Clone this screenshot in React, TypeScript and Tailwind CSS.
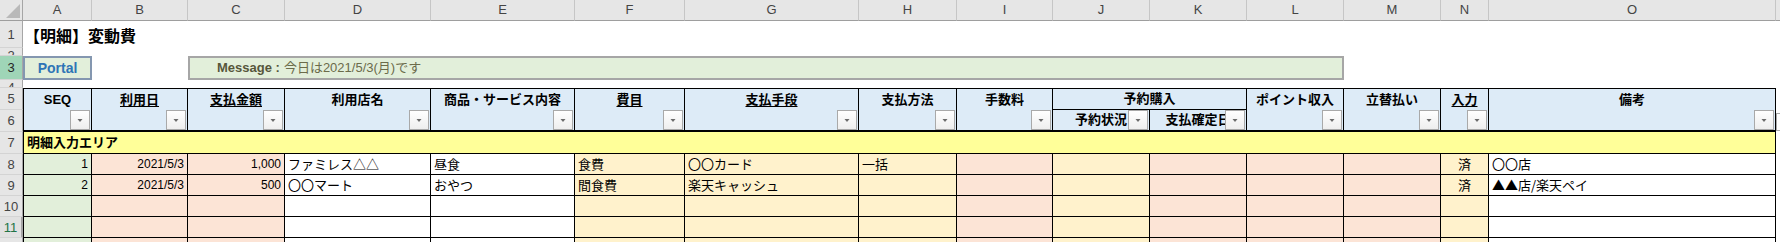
import React from 'react';

type Col = {
  letter: string;
  fill: string;
  align: string;
  head?: string;
  ul?: boolean;
  num?: boolean;
};

const FONT = "font-['Liberation_Sans','Noto_Sans_CJK_JP',sans-serif]";

// A..O (P is the sliver at the right edge)
const cols: Col[] = [
  { letter: 'A', fill: 'bg-[#e2efda]', align: 'justify-end', head: 'SEQ', num: true },
  { letter: 'B', fill: 'bg-[#fce4d6]', align: 'justify-end', head: '利用日', ul: true, num: true },
  { letter: 'C', fill: 'bg-[#fce4d6]', align: 'justify-end', head: '支払金額', ul: true, num: true },
  { letter: 'D', fill: 'bg-white', align: 'justify-start', head: '利用店名' },
  { letter: 'E', fill: 'bg-white', align: 'justify-start', head: '商品・サービス内容' },
  { letter: 'F', fill: 'bg-[#fff2cc]', align: 'justify-start', head: '費目', ul: true },
  { letter: 'G', fill: 'bg-[#fff2cc]', align: 'justify-start', head: '支払手段', ul: true },
  { letter: 'H', fill: 'bg-[#fff2cc]', align: 'justify-start', head: '支払方法' },
  { letter: 'I', fill: 'bg-[#fce4d6]', align: 'justify-end', head: '手数料', num: true },
  { letter: 'J', fill: 'bg-[#fff2cc]', align: 'justify-start' },
  { letter: 'K', fill: 'bg-[#fce4d6]', align: 'justify-start' },
  { letter: 'L', fill: 'bg-[#fce4d6]', align: 'justify-end', head: 'ポイント収入', num: true },
  { letter: 'M', fill: 'bg-[#fce4d6]', align: 'justify-end', head: '立替払い', num: true },
  { letter: 'N', fill: 'bg-[#fff2cc]', align: 'justify-center', head: '入力', ul: true },
  { letter: 'O', fill: 'bg-white', align: 'justify-start', head: '備考' }
];

const rows: string[][] = [
  ['1', '2021/5/3', '1,000', 'ファミレス△△', '昼食', '食費', '〇〇カード', '一括', '', '', '', '', '', '済', '〇〇店'],
  ['2', '2021/5/3', '500', '〇〇マート', 'おやつ', '間食費', '楽天キャッシュ', '', '', '', '', '', '', '済', '▲▲店/楽天ペイ'],
  ['', '', '', '', '', '', '', '', '', '', '', '', '', '', ''],
  ['', '', '', '', '', '', '', '', '', '', '', '', '', '', '']
];

function FilterButton() {
  return (
    <div className="absolute right-[1px] bottom-0 w-[20px] h-[20px] border border-[#a9a9a9] bg-gradient-to-b from-white to-[#eeeeee]">
      <svg width="18" height="18" viewBox="0 0 18 18" className="block">
        <polygon points="6.5,8 11.5,8 9,11" fill="#6b6b6b" />
      </svg>
    </div>
  );
}

function RowLabel({ n, extra = '' }: { n: number; extra?: string }) {
  return (
    <div
      className={`flex items-center justify-center overflow-hidden border-b border-r border-b-[#d4d4d4] border-r-[#a6a6a6] text-[13px] leading-none ${extra}`}
    >
      {n}
    </div>
  );
}

export default function App() {
  return (
    <div
      className={`w-[1780px] h-[242px] overflow-hidden bg-white text-black ${FONT} grid grid-cols-[23px_69px_96px_97px_146px_144px_110px_174px_98px_96px_97px_97px_97px_97px_48px_287px_1fr] grid-rows-[21px_27px_8px_24px_8px_22px_22px_22px_21px_21px_21px_21px_4px]`}
    >
      {/* column letters */}
      <div className="relative bg-[#e6e6e6] border-r border-b border-r-[#a6a6a6] border-b-[#9e9e9e]">
        <svg width="14" height="14" viewBox="0 0 14 14" className="absolute right-[2px] bottom-[2px]">
          <polygon points="14,0 14,14 0,14" fill="#b9b9b9" />
        </svg>
      </div>
      {cols.map((c) => (
        <div
          key={c.letter}
          className="flex items-center justify-center bg-[#e6e6e6] border-r border-b border-r-[#c6c6c6] border-b-[#9e9e9e] text-[13px] text-[#444]"
        >
          {c.letter}
        </div>
      ))}
      <div className="bg-[#e6e6e6] border-b border-b-[#9e9e9e]" />

      {/* row 1: title */}
      <RowLabel n={1} extra="bg-[#e6e6e6] text-[#444]" />
      <div className="col-span-16 flex items-center pl-[1px] text-[16px] font-bold font-['Noto_Sans_CJK_JP',sans-serif]">
        【明細】変動費
      </div>

      {/* row 2 */}
      <div className="flex justify-center overflow-hidden bg-[#e6e6e6] border-b border-r border-b-[#d4d4d4] border-r-[#a6a6a6] text-[13px] text-[#444] leading-[13px] pt-[1px]">
        2
      </div>
      <div className="col-span-16" />

      {/* row 3: Portal / Message */}
      <RowLabel n={3} extra="bg-[#9fd5b7] text-[#262626]" />
      <div className="flex items-center justify-center bg-[#e2efda] border-2 border-[#8497b0] text-[14px] font-bold text-[#2e75b6]">
        Portal
      </div>
      <div />
      <div className="col-span-10 flex items-center bg-[#e2efda] border-2 border-[#a6a6a6] pl-[27px] text-[13px] text-[#6b6b4a]">
        <span className="font-bold text-[#56563a]">Message :</span>
        <span className="ml-[4px]">今日は2021/5/3(月)です</span>
      </div>
      <div className="col-span-4" />

      {/* row 4 */}
      <div className="flex justify-center overflow-hidden bg-[#e6e6e6] border-b border-r border-b-[#d4d4d4] border-r-[#a6a6a6] text-[13px] text-[#444] leading-[13px] pt-[1px]">
        4
      </div>
      <div className="col-span-16" />

      {/* rows 5-6: table header */}
      <RowLabel n={5} extra="bg-[#e6e6e6] text-[#444]" />
      {cols.slice(0, 9).map((c, i) => (
        <div
          key={c.letter}
          className={`row-span-2 relative bg-[#ddebf7] border-t border-r border-b-2 border-black ${i === 0 ? 'border-l' : ''}`}
        >
          <div className="h-[21px] flex items-center justify-center text-[13px] font-bold whitespace-nowrap overflow-hidden">
            <span className={c.ul ? 'underline underline-offset-2' : ''}>{c.head}</span>
          </div>
          <FilterButton />
        </div>
      ))}
      <div className="col-span-2 flex items-center justify-center bg-[#ddebf7] border-t border-r border-b border-black text-[13px] font-bold">
        予約購入
      </div>
      {cols.slice(11).map((c) => (
        <div key={c.letter} className="row-span-2 relative bg-[#ddebf7] border-t border-r border-b-2 border-black">
          <div className="h-[21px] flex items-center justify-center text-[13px] font-bold whitespace-nowrap overflow-hidden">
            <span className={c.ul ? 'underline underline-offset-2' : ''}>{c.head}</span>
          </div>
          <FilterButton />
        </div>
      ))}
      <div className="row-span-2 relative">
        <div className="absolute left-0 bottom-[1px] w-[20px] h-[18px] border border-[#a9a9a9] bg-white" />
      </div>

      <RowLabel n={6} extra="bg-[#e6e6e6] text-[#444]" />
      <div className="relative flex items-center justify-center overflow-hidden bg-[#ddebf7] border-r border-b-2 border-black text-[13px] font-bold whitespace-nowrap">
        予約状況
        <FilterButton />
      </div>
      <div className="relative flex items-center justify-center overflow-hidden bg-[#ddebf7] border-r border-b-2 border-black text-[13px] font-bold whitespace-nowrap">
        支払確定日
        <FilterButton />
      </div>

      {/* row 7 */}
      <RowLabel n={7} extra="bg-[#e6e6e6] text-[#444]" />
      <div className="col-span-15 flex items-center pl-[3px] bg-[#ffff99] border-l border-r border-b border-black text-[13px] font-bold">
        明細入力エリア
      </div>
      <div />

      {/* rows 8-11 */}
      {rows.map((r, ri) => (
        <React.Fragment key={ri}>
          <RowLabel
            n={ri + 8}
            extra={ri === 3 ? 'bg-[#e1e1e1] text-[#217346] border-r-2 border-r-[#217346]' : 'bg-[#e6e6e6] text-[#444]'}
          />
          {cols.map((c, ci) => (
            <div
              key={c.letter}
              className={`flex items-center px-[3px] overflow-hidden whitespace-nowrap border-r border-b border-black ${c.fill} ${c.align} ${
                ci === 0 ? 'border-l' : ''
              } ${c.num ? 'text-[12px]' : "text-[13px] font-['Noto_Sans_CJK_JP',sans-serif]"}`}
            >
              {r[ci]}
            </div>
          ))}
          <div />
        </React.Fragment>
      ))}

      {/* row 12 (cut off) */}
      <div className="bg-[#e6e6e6] border-r border-r-[#a6a6a6]" />
      {cols.map((c, ci) => (
        <div key={c.letter} className={`border-r border-black ${c.fill} ${ci === 0 ? 'border-l' : ''}`} />
      ))}
      <div />
    </div>
  );
}
